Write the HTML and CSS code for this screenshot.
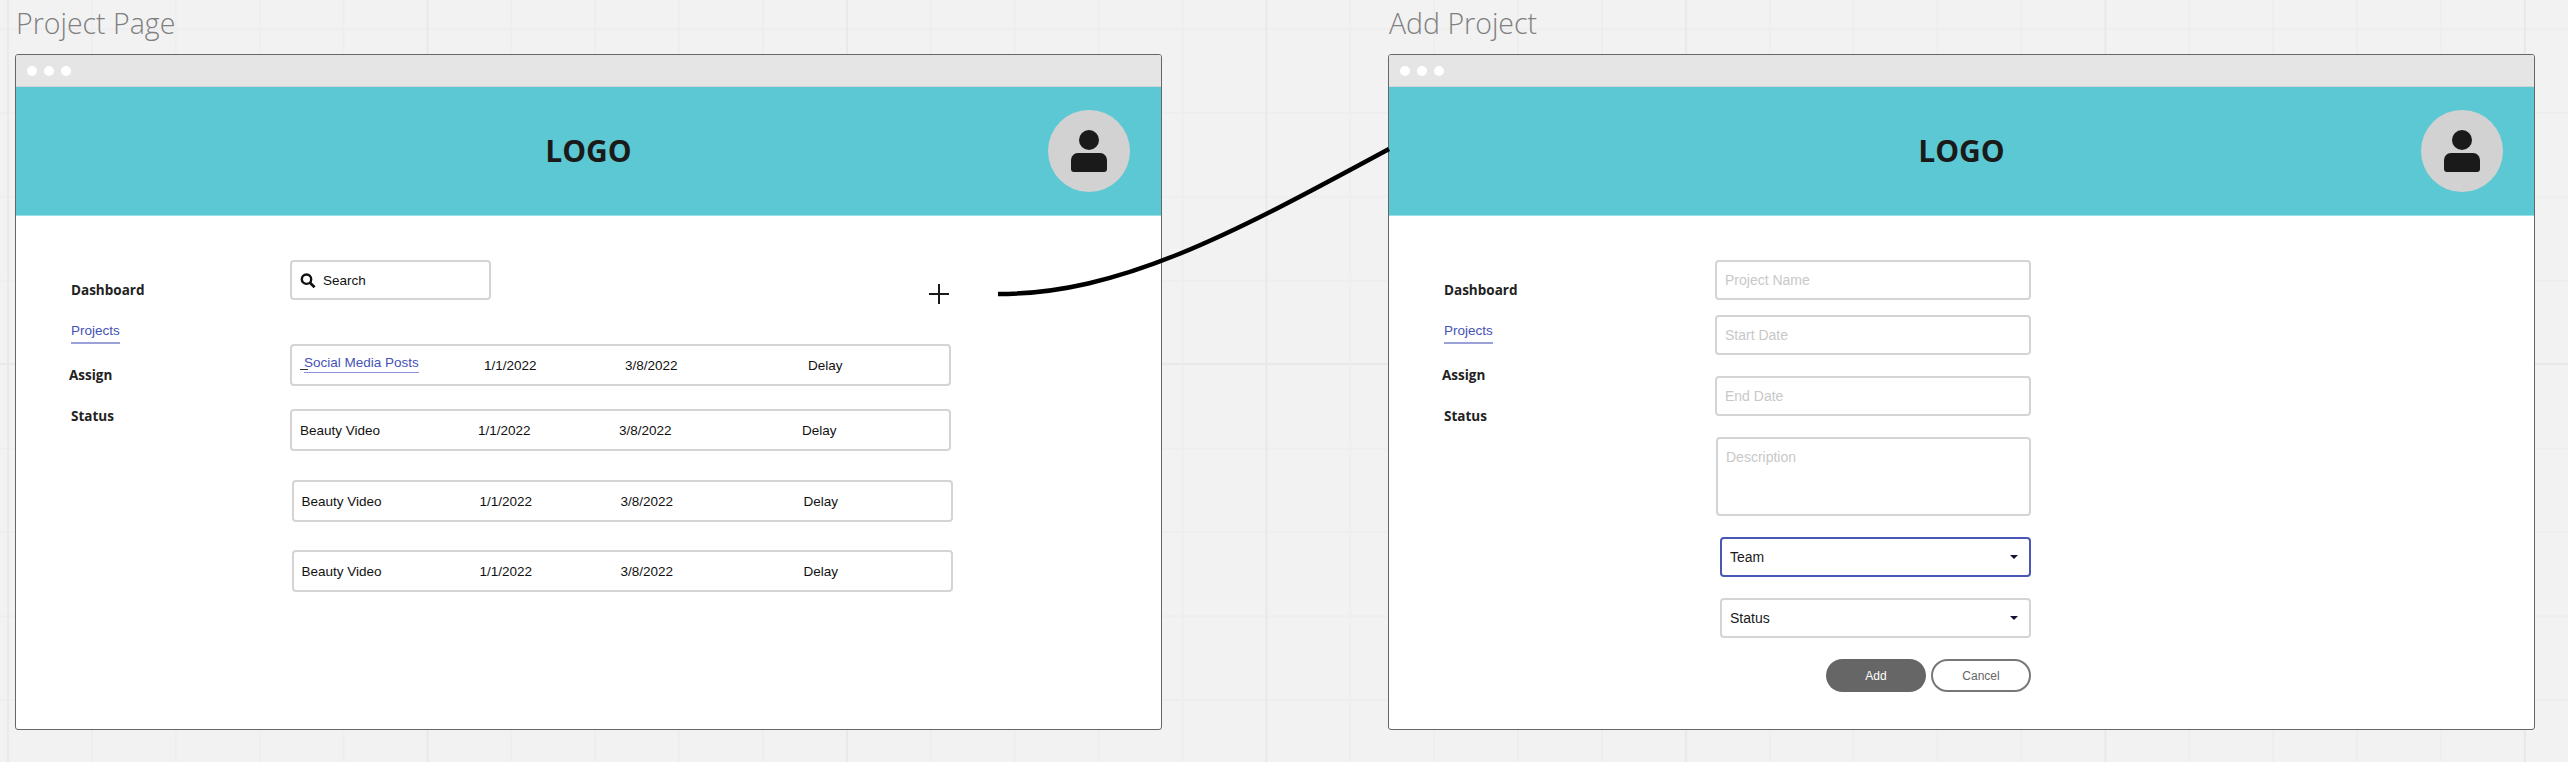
FILE: index.html
```html
<!DOCTYPE html>
<html lang="en">
<head>
    <meta charset="UTF-8">
    <title>Project wireframes</title>
    <link rel="stylesheet" href="styles.css">
</head>
<body>
    <div class="board">
        <section class="frame">
            <h2 class="frame-title">Project Page</h2>
            <div class="window">
                <div class="window-bar"><i></i><i></i><i></i></div>
                <header class="banner">
                    <div class="logo">LOGO</div>
                    <div class="avatar">
                        <svg width="36" height="42" viewBox="0 0 36 42"><circle cx="18" cy="10" r="10"/><path d="M7 23h22c4 0 7 3 7 8v8c0 2-1 3-3 3H3c-2 0-3-1-3-3v-8c0-5 3-8 7-8z"/></svg>
                    </div>
                </header>
                <div class="content">
                    <nav class="side">
                        <a class="side-item">Dashboard</a>
                        <a class="side-item side-active">Projects</a>
                        <a class="side-item side-assign">Assign</a>
                        <a class="side-item">Status</a>
                    </nav>
                    <main class="projects">
                        <div class="toolbar">
                            <div class="search">
                                <svg width="16" height="15" viewBox="0 0 16 15"><circle cx="6.5" cy="6.2" r="4.7" fill="none" stroke="#111" stroke-width="2.4"/><path d="M10 9.8l4.6 4.4" stroke="#111" stroke-width="2.8"/></svg>
                                <span>Search</span>
                            </div>
                            <svg class="plus" width="20" height="20" viewBox="0 0 20 20"><path d="M0 10h20M10 0v20" stroke="#1a1a1a" stroke-width="2"/></svg>
                        </div>
                        <div class="row row-first">
                            <span class="row-name"><span class="row-dash"></span><a class="row-link">Social Media Posts</a></span>
                            <span>1/1/2022</span><span>3/8/2022</span><span>Delay</span>
                        </div>
                        <div class="row row-second">
                            <span class="row-name">Beauty Video</span>
                            <span>1/1/2022</span><span>3/8/2022</span><span>Delay</span>
                        </div>
                        <div class="row row-third">
                            <span class="row-name">Beauty Video</span>
                            <span>1/1/2022</span><span>3/8/2022</span><span>Delay</span>
                        </div>
                        <div class="row row-fourth">
                            <span class="row-name">Beauty Video</span>
                            <span>1/1/2022</span><span>3/8/2022</span><span>Delay</span>
                        </div>
                    </main>
                </div>
            </div>
        </section>

        <section class="frame">
            <h2 class="frame-title">Add Project</h2>
            <div class="window">
                <div class="window-bar"><i></i><i></i><i></i></div>
                <header class="banner">
                    <div class="logo">LOGO</div>
                    <div class="avatar">
                        <svg width="36" height="42" viewBox="0 0 36 42"><circle cx="18" cy="10" r="10"/><path d="M7 23h22c4 0 7 3 7 8v8c0 2-1 3-3 3H3c-2 0-3-1-3-3v-8c0-5 3-8 7-8z"/></svg>
                    </div>
                </header>
                <div class="content">
                    <nav class="side">
                        <a class="side-item">Dashboard</a>
                        <a class="side-item side-active">Projects</a>
                        <a class="side-item side-assign">Assign</a>
                        <a class="side-item">Status</a>
                    </nav>
                    <form class="form">
                        <div class="field">Project Name</div>
                        <div class="field field-tight">Start Date</div>
                        <div class="field">End Date</div>
                        <div class="field field-area">Description</div>
                        <div class="field field-select field-focus">Team<b class="caret"></b></div>
                        <div class="field field-select">Status<b class="caret"></b></div>
                        <div class="actions">
                            <button type="button" class="btn btn-add">Add</button>
                            <button type="button" class="btn btn-cancel">Cancel</button>
                        </div>
                    </form>
                </div>
            </div>
        </section>

        <!-- connector from the plus to the second frame -->
        <svg class="connector" width="2568" height="762" viewBox="0 0 2568 762"><path d="M998 294C1120 294 1230 235 1389 149" fill="none" stroke="#000" stroke-width="4.5"/></svg>
    </div>
</body>
</html>
```

FILE: styles.css
```css
html, body {
    margin: 0;
    height: 762px;
    overflow: hidden;
}

body {
    font-family: "Liberation Sans", Arial, sans-serif;
    color: #1a1a1a;
}

/* canvas grid: minor every 84px, major every 420px */
.board {
    position: relative;
    display: flex;
    gap: 226px;
    height: 762px;
    padding-left: 15px;
    box-sizing: border-box;
    background-color: #f2f2f2;
    background-image:
        linear-gradient(to right, #e9e9e9 2px, transparent 2px),
        linear-gradient(to bottom, #e9e9e9 2px, transparent 2px),
        linear-gradient(to right, #eeeeee 2px, transparent 2px),
        linear-gradient(to bottom, #eeeeee 2px, transparent 2px);
    background-size: 419.5px 419.5px, 419.5px 419.5px, 83.9px 83.9px, 83.9px 83.9px;
    background-position: 7px 0, 0 363px, 7px 0, 0 28px;
}

.frame-title {
    height: 54px;
    margin: 0;
    padding-left: 1px;
    font-family: "Open Sans", sans-serif;
    font-size: 28.5px;
    font-weight: 300;
    line-height: 46px;
    color: #808080;
}

.window {
    width: 1147px;
    height: 676px;
    box-sizing: border-box;
    border: 1px solid #666;
    border-radius: 3px;
    background: #fff;
    overflow: hidden;
}

.window-bar {
    display: flex;
    align-items: center;
    gap: 7px;
    height: 31px;
    padding-left: 11px;
    background: #e5e5e5;
    border-bottom: 1px solid #cfd6d7;
}

.window-bar i {
    width: 10px;
    height: 10px;
    border-radius: 50%;
    background: #fff;
}

.banner {
    display: flex;
    align-items: center;
    height: 128px;
    padding-right: 31px;
    background: #5cc8d3;
    border-bottom: 1px solid #9adfe5;
}

.logo {
    flex: 1;
    padding-left: 113px;
    text-align: center;
    font-family: "Open Sans", sans-serif;
    font-size: 30px;
    font-weight: 700;
    line-height: 40px;
    color: #1a1a1a;
}

.avatar {
    display: flex;
    align-items: center;
    justify-content: center;
    width: 82px;
    height: 82px;
    border-radius: 50%;
    background: #d2d2d2;
}

.avatar svg {
    fill: #1a1a1a;
}

.content {
    display: flex;
}

.side {
    display: flex;
    flex-direction: column;
    align-items: flex-start;
    gap: 21px;
    width: 219px;
    padding: 64px 0 0 55px;
    box-sizing: border-box;
}

.side-item {
    font-family: "Open Sans", sans-serif;
    font-size: 13.5px;
    font-weight: 700;
    line-height: 20px;
    color: #222;
}

.side-active {
    padding-bottom: 1px;
    border-bottom: 2px solid #9aa0d8;
    font-family: "Liberation Sans", Arial, sans-serif;
    font-size: 13.5px;
    font-weight: 400;
    color: #4553b4;
}

.side-assign {
    margin-left: -2px;
}

.projects {
    display: flex;
    flex-direction: column;
    width: 663px;
    margin-left: 55px;
    padding-top: 44px;
}

.toolbar {
    display: flex;
    justify-content: space-between;
    align-items: flex-end;
    height: 44px;
    padding-right: 4px;
    margin-bottom: 40px;
}

.search {
    display: flex;
    align-items: center;
    gap: 7px;
    align-self: flex-start;
    width: 201px;
    height: 40px;
    box-sizing: border-box;
    padding-left: 8px;
    border: 2px solid #d4d4d4;
    border-radius: 4px;
    font-size: 13.5px;
    color: #111;
}

.plus {
    display: block;
}

.row {
    display: grid;
    grid-template-columns: 178px 141px 183px auto;
    align-items: center;
    width: 661px;
    height: 42px;
    box-sizing: border-box;
    padding-left: 8px;
    border: 2px solid #d4d4d4;
    border-radius: 4px;
    font-size: 13.5px;
    color: #111;
}

.row-first {
    grid-template-columns: 184px 141px 183px auto;
}

.row-second {
    margin-top: 23px;
}

.row-third {
    margin: 29px 0 0 1.5px;
}

.row-fourth {
    margin: 28px 0 0 1.5px;
}

.row-name {
    display: flex;
    align-items: flex-end;
}

.row-dash {
    width: 8px;
    height: 1px;
    margin: 0 -4px 3px 0;
    background: #333;
}

.row-link {
    margin-top: -2px;
    padding-bottom: 2px;
    border-bottom: 1px solid #8a93d8;
    color: #4553b4;
}

.form {
    display: flex;
    flex-direction: column;
    align-items: flex-end;
    gap: 21px;
    width: 316px;
    margin-left: 107px;
    padding-top: 44px;
}

.field {
    display: flex;
    align-items: center;
    width: 316px;
    height: 40px;
    box-sizing: border-box;
    padding: 0 8px;
    border: 2px solid #d4d4d4;
    border-radius: 4px;
    font-size: 14px;
    color: #c8c8c8;
}

.field-tight {
    margin-top: -6px;
}

.field-area {
    align-items: flex-start;
    width: 315px;
    height: 79px;
    padding-top: 10px;
}

.field-select {
    justify-content: space-between;
    width: 311px;
    padding-right: 11px;
    color: #1a1a1a;
}

.field-focus {
    border-color: #4a57b5;
}

.caret {
    width: 0;
    height: 0;
    border-left: 4px solid transparent;
    border-right: 4px solid transparent;
    border-top: 4px solid #111133;
}

.actions {
    display: flex;
    gap: 5px;
}

.btn {
    width: 100px;
    height: 33px;
    padding: 0;
    border-radius: 17px;
    font-family: "Liberation Sans", Arial, sans-serif;
    font-size: 12px;
}

.btn-add {
    border: 0;
    background: #666;
    color: #fff;
}

.btn-cancel {
    border: 2px solid #777;
    background: #fff;
    color: #666;
}

.connector {
    position: absolute;
    top: 0;
    left: 0;
    pointer-events: none;
}
```
